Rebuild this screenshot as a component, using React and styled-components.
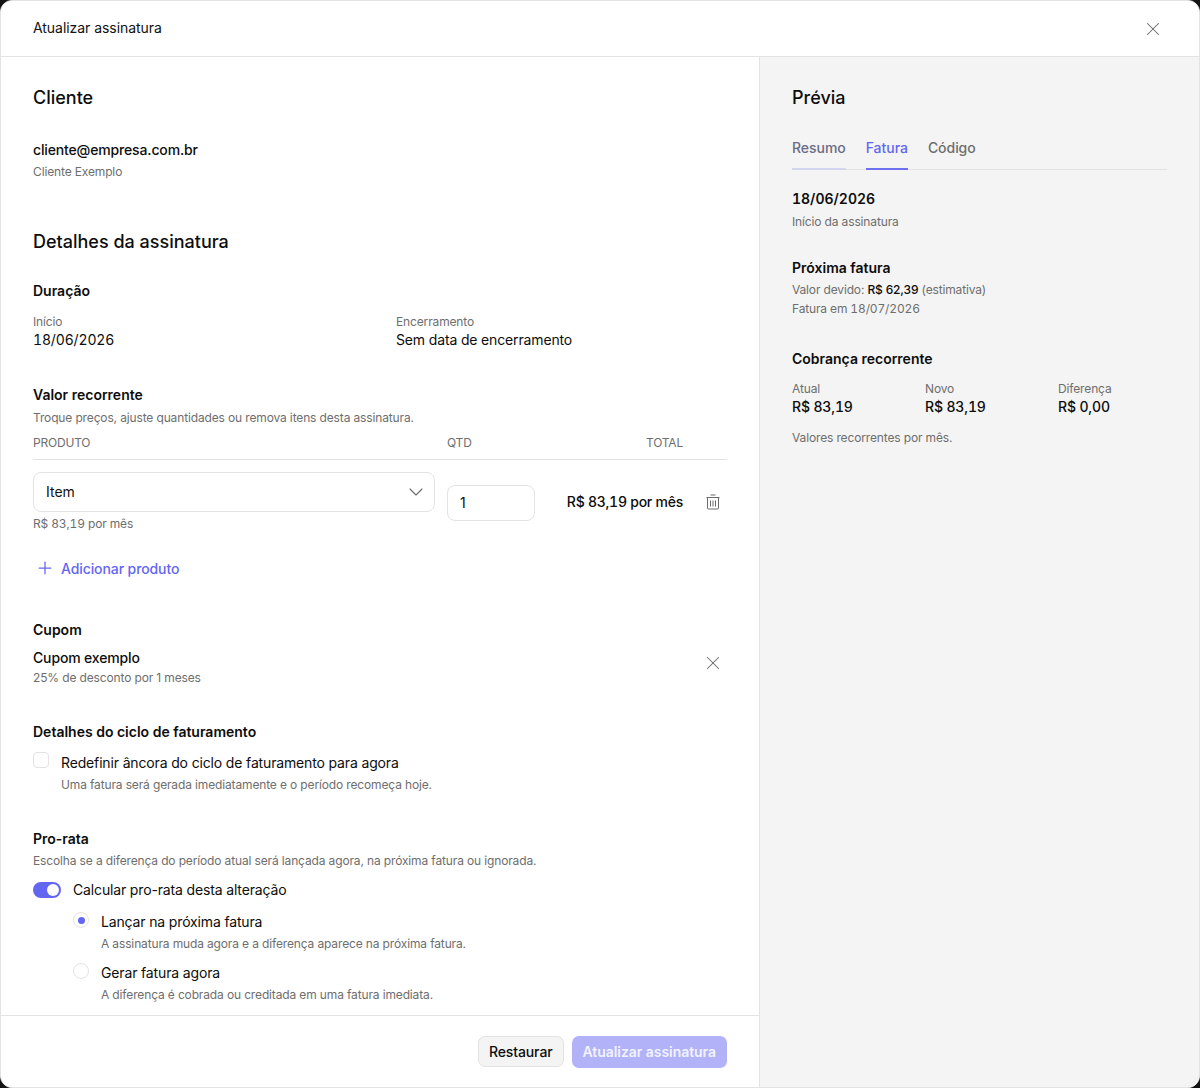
import React from "react";
import styled, { css, createGlobalStyle } from "styled-components";
import { X, ChevronDown, Plus } from "lucide-react";

const GlobalStyle = createGlobalStyle`
  html, body { margin: 0; padding: 0; background: #141414; }
  * { box-sizing: border-box; }
  body {
    font-family: Inter, "Liberation Sans", sans-serif;
    color: #0d0d0d;
  }
`;

const tabular = css`
  font-variant-numeric: ${(p) => (p.$num ? "tabular-nums" : "normal")};
`;

const Modal = styled.div`
  width: 1200px;
  height: 1088px;
  background: #fff;
  border: 1px solid #e3e3e3;
  border-radius: 12px;
  overflow: hidden;
  display: flex;
  flex-direction: column;
`;

const Header = styled.header`
  height: 56px;
  flex: none;
  display: flex;
  align-items: center;
  justify-content: space-between;
  padding: 0 35px 2px 32px;
  border-bottom: 1px solid #e3e3e3;
  font-size: 14px;
  letter-spacing: -0.05px;
  color: #111;
`;

const CloseButton = styled.span`
  display: flex;
  margin-top: 2px;
  color: #6b6b6b;
`;

const Body = styled.div`
  flex: 1;
  min-height: 0;
  display: flex;
`;

const Main = styled.div`
  width: 759px;
  flex: none;
  display: flex;
  flex-direction: column;
  border-right: 1px solid #e3e3e3;
`;

const Scroll = styled.div`
  flex: 1;
  min-height: 0;
  overflow: hidden;
  padding: 28px 32px 0;
`;

const Footer = styled.footer`
  height: 72px;
  flex: none;
  display: flex;
  justify-content: flex-end;
  align-items: center;
  gap: 8px;
  padding: 0 32px;
  border-top: 1px solid #e3e3e3;
`;

const Heading = styled.h2`
  margin: ${(p) => p.$before || 0}px 0 ${(p) => p.$after || 0}px;
  font-size: 18px;
  line-height: 26px;
  font-weight: 500;
  color: #0d0d0d;
`;

const Sub = styled.h3`
  margin: ${(p) => p.$before || 0}px 0 ${(p) => p.$after || 0}px;
  font-size: 14px;
  line-height: 20px;
  font-weight: 600;
  color: #0d0d0d;
`;

const Body14 = styled.div`
  ${tabular}
  font-size: 14px;
  line-height: 20px;
  letter-spacing: -0.15px;
  font-weight: ${(p) => p.$weight || 400};
  color: #0d0d0d;
  margin-top: ${(p) => p.$before || 0}px;
`;

const Muted = styled.div`
  ${tabular}
  font-size: 12px;
  line-height: 18px;
  letter-spacing: ${(p) => p.$spacing || -0.14}px;
  color: #6e6e6e;
  margin-top: ${(p) => p.$before || 0}px;
`;

const TwoCols = styled.div`
  display: grid;
  grid-template-columns: 363px 1fr;
`;

const TableHead = styled.div`
  display: grid;
  grid-template-columns: 414px 100px 136px 44px;
  height: 26px;
  margin-top: 7px;
  border-bottom: 1px solid #e3e3e3;
  font-size: 12px;
  line-height: 18px;
  letter-spacing: -0.2px;
  color: #6e6e6e;
`;

const TotalHead = styled.span`
  text-align: right;
`;

const ItemRow = styled.div`
  display: grid;
  grid-template-columns: 414px 100px 136px 44px;
  padding-top: 12px;
`;

const Select = styled.div`
  width: 402px;
  height: 40px;
  display: flex;
  align-items: center;
  justify-content: space-between;
  padding: 0 12px 1px;
  border: 1px solid #e3e3e3;
  border-radius: 8px;
  font-size: 14px;
  color: #111;
`;

const ChevronWrap = styled.span`
  display: flex;
  margin-right: -6px;
  color: #6b6b6b;
`;

const QtyInput = styled.div`
  width: 88px;
  height: 36px;
  margin-top: 13px;
  display: flex;
  align-items: center;
  padding: 0 12px 1px;
  border: 1px solid #e3e3e3;
  border-radius: 8px;
  font-size: 14px;
`;

const RowTotal = styled.div`
  margin-top: 20px;
  font-size: 14px;
  line-height: 20px;
  letter-spacing: -0.25px;
  font-weight: 500;
  font-variant-numeric: tabular-nums;
  text-align: right;
  white-space: nowrap;
`;

const IconCell = styled.div`
  display: flex;
  justify-content: flex-end;
  padding: ${(p) => p.$top || 0}px ${(p) => p.$right || 0}px 0 0;
  color: #6b6b6b;
`;

const AddProduct = styled.div`
  display: flex;
  align-items: center;
  gap: 6px;
  margin-top: 25px;
  padding-left: 2px;
  height: 20px;
  font-size: 14px;
  font-weight: 500;
  letter-spacing: -0.1px;
  color: #6366f1;
`;

const CouponRow = styled.div`
  display: flex;
  justify-content: space-between;
  margin-top: 8px;
`;

const CheckRow = styled.div`
  display: flex;
  gap: 12px;
  margin-top: 11px;
`;

const Checkbox = styled.span`
  width: 16px;
  height: 16px;
  flex: none;
  margin-top: -1px;
  border: 1px solid #e3e3e3;
  border-radius: 4px;
  background: #fff;
`;

const ToggleRow = styled.div`
  display: flex;
  align-items: center;
  gap: 12px;
  margin-top: 10px;
`;

const Toggle = styled.span`
  width: 28px;
  height: 16px;
  flex: none;
  display: flex;
  justify-content: flex-end;
  align-items: center;
  padding: 2px;
  border-radius: 8px;
  background: #6366f1;
`;

const Knob = styled.span`
  width: 12px;
  height: 12px;
  border-radius: 50%;
  background: #fff;
`;

const RadioRow = styled.div`
  display: flex;
  gap: 12px;
  margin: ${(p) => p.$before || 0}px 0 0 40px;
`;

const Radio = styled.span`
  width: 16px;
  height: 16px;
  flex: none;
  display: flex;
  align-items: center;
  justify-content: center;
  border: 1px solid #e3e3e3;
  border-radius: 50%;
`;

const RadioDot = styled.span`
  width: 7px;
  height: 7px;
  border-radius: 50%;
  background: #6366f1;
`;

const SecondaryButton = styled.button`
  height: 31px;
  padding: 0 10px;
  font: 500 14px Inter, sans-serif;
  letter-spacing: -0.1px;
  color: #0d0d0d;
  background: #f4f4f4;
  border: 1px solid #e3e3e3;
  border-radius: 7px;
`;

const PrimaryButton = styled.button`
  height: 32px;
  padding: 0 11px;
  font: 600 14px Inter, sans-serif;
  letter-spacing: -0.05px;
  color: #f2f2ff;
  background: #b1b2f8;
  border: 0;
  border-radius: 7px;
`;

const Preview = styled.aside`
  flex: 1;
  min-width: 0;
  background: #f4f4f4;
  padding: 28px 32px;
`;

const Tabs = styled.div`
  display: flex;
  gap: 20px;
  margin-top: 27px;
  height: 32px;
  border-bottom: 1px solid #e3e3e3;
`;

const Tab = styled.div`
  height: 32px;
  font-size: 14px;
  line-height: 20px;
  font-weight: 500;
  letter-spacing: -0.04px;
  color: ${(p) => p.$color};
  border-bottom: 2px solid ${(p) => p.$line || "transparent"};
`;

const PreviewDate = styled.div`
  margin-top: 19px;
  font-size: 14px;
  line-height: 20px;
  font-weight: 600;
  font-variant-numeric: tabular-nums;
`;

const DueLine = styled.div`
  font-size: 12px;
  line-height: 18px;
  letter-spacing: -0.15px;
  color: #6e6e6e;
  margin-top: 3px;
`;

const DueValue = styled.span`
  color: #0d0d0d;
  font-weight: 500;
`;

const Stats = styled.div`
  display: grid;
  grid-template-columns: 133px 133px 1fr;
  margin-top: 11px;
`;

const TrashIcon = () => (
  <svg width="14" height="16" viewBox="0 0 14 16" fill="none" stroke="currentColor" strokeWidth="1">
    <path d="M4.5 1h5M0.5 3.5h13" />
    <path d="M1.5 3.5v10.5a1 1 0 0 0 1 1h9a1 1 0 0 0 1-1V3.5" />
    <path d="M4.5 6.5v6M7 6.5v6M9.5 6.5v6" />
  </svg>
);

export default function App() {
  return (
    <>
      <GlobalStyle />
      <Modal>
        <Header>
          Atualizar assinatura
          <CloseButton><X size={22} strokeWidth={1.1} /></CloseButton>
        </Header>
        <Body>
          <Main>
            <Scroll>
              <Heading $after={29}>Cliente</Heading>
              <Body14 $weight={500}>cliente@empresa.com.br</Body14>
              <Muted $before={3}>Cliente Exemplo</Muted>

              <Heading $before={48} $after={26}>Detalhes da assinatura</Heading>
              <Sub $after={12}>Duração</Sub>
              <TwoCols>
                <div>
                  <Muted>Início</Muted>
                  <Body14 $num $before={-1}>18/06/2026</Body14>
                </div>
                <div>
                  <Muted>Encerramento</Muted>
                  <Body14 $before={-1}>Sem data de encerramento</Body14>
                </div>
              </TwoCols>

              <Sub $before={35}>Valor recorrente</Sub>
              <Muted $before={4}>Troque preços, ajuste quantidades ou remova itens desta assinatura.</Muted>
              <TableHead>
                <span>PRODUTO</span>
                <span>QTD</span>
                <TotalHead>TOTAL</TotalHead>
                <span />
              </TableHead>
              <ItemRow>
                <div>
                  <Select>
                    Item
                    <ChevronWrap><ChevronDown size={24} strokeWidth={1.1} /></ChevronWrap>
                  </Select>
                  <Muted $num $before={3}>R$ 83,19 por mês</Muted>
                </div>
                <QtyInput>1</QtyInput>
                <RowTotal>R$ 83,19 por mês</RowTotal>
                <IconCell $top={22} $right={7}><TrashIcon /></IconCell>
              </ItemRow>
              <AddProduct>
                <Plus size={20} strokeWidth={1.5} />
                Adicionar produto
              </AddProduct>

              <Sub $before={42}>Cupom</Sub>
              <CouponRow>
                <div>
                  <Body14 $weight={500}>Cupom exemplo</Body14>
                  <Muted $before={1}>25% de desconto por 1 meses</Muted>
                </div>
                <IconCell $top={4} $right={3}><X size={22} strokeWidth={1.1} /></IconCell>
              </CouponRow>

              <Sub $before={35}>Detalhes do ciclo de faturamento</Sub>
              <CheckRow>
                <Checkbox />
                <div>
                  <Body14>Redefinir âncora do ciclo de faturamento para agora</Body14>
                  <Muted $before={3}>Uma fatura será gerada imediatamente e o período recomeça hoje.</Muted>
                </div>
              </CheckRow>

              <Sub $before={35}>Pro-rata</Sub>
              <Muted $before={3}>Escolha se a diferença do período atual será lançada agora, na próxima fatura ou ignorada.</Muted>
              <ToggleRow>
                <Toggle><Knob /></Toggle>
                <Body14>Calcular pro-rata desta alteração</Body14>
              </ToggleRow>
              <RadioRow $before={12}>
                <Radio><RadioDot /></Radio>
                <div>
                  <Body14>Lançar na próxima fatura</Body14>
                  <Muted $before={3}>A assinatura muda agora e a diferença aparece na próxima fatura.</Muted>
                </div>
              </RadioRow>
              <RadioRow $before={10}>
                <Radio />
                <div>
                  <Body14>Gerar fatura agora</Body14>
                  <Muted $before={3}>A diferença é cobrada ou creditada em uma fatura imediata.</Muted>
                </div>
              </RadioRow>
            </Scroll>
            <Footer>
              <SecondaryButton>Restaurar</SecondaryButton>
              <PrimaryButton>Atualizar assinatura</PrimaryButton>
            </Footer>
          </Main>
          <Preview>
            <Heading>Prévia</Heading>
            <Tabs>
              <Tab $color="#6b6b85" $line="#d4d5ee">Resumo</Tab>
              <Tab $color="#6366f1" $line="#6f70f0">Fatura</Tab>
              <Tab $color="#6e6e6e">Código</Tab>
            </Tabs>
            <PreviewDate>18/06/2026</PreviewDate>
            <Muted $before={4}>Início da assinatura</Muted>
            <Sub $before={27}>Próxima fatura</Sub>
            <DueLine>Valor devido: <DueValue>R$ 62,39</DueValue> (estimativa)</DueLine>
            <Muted $num $before={1}>Fatura em 18/07/2026</Muted>
            <Sub $before={31}>Cobrança recorrente</Sub>
            <Stats>
              <div><Muted>Atual</Muted><Body14 $num $weight={500} $before={-1}>R$ 83,19</Body14></div>
              <div><Muted>Novo</Muted><Body14 $num $weight={500} $before={-1}>R$ 83,19</Body14></div>
              <div><Muted>Diferença</Muted><Body14 $num $weight={500} $before={-1}>R$ 0,00</Body14></div>
            </Stats>
            <Muted $before={12}>Valores recorrentes por mês.</Muted>
          </Preview>
        </Body>
      </Modal>
    </>
  );
}
